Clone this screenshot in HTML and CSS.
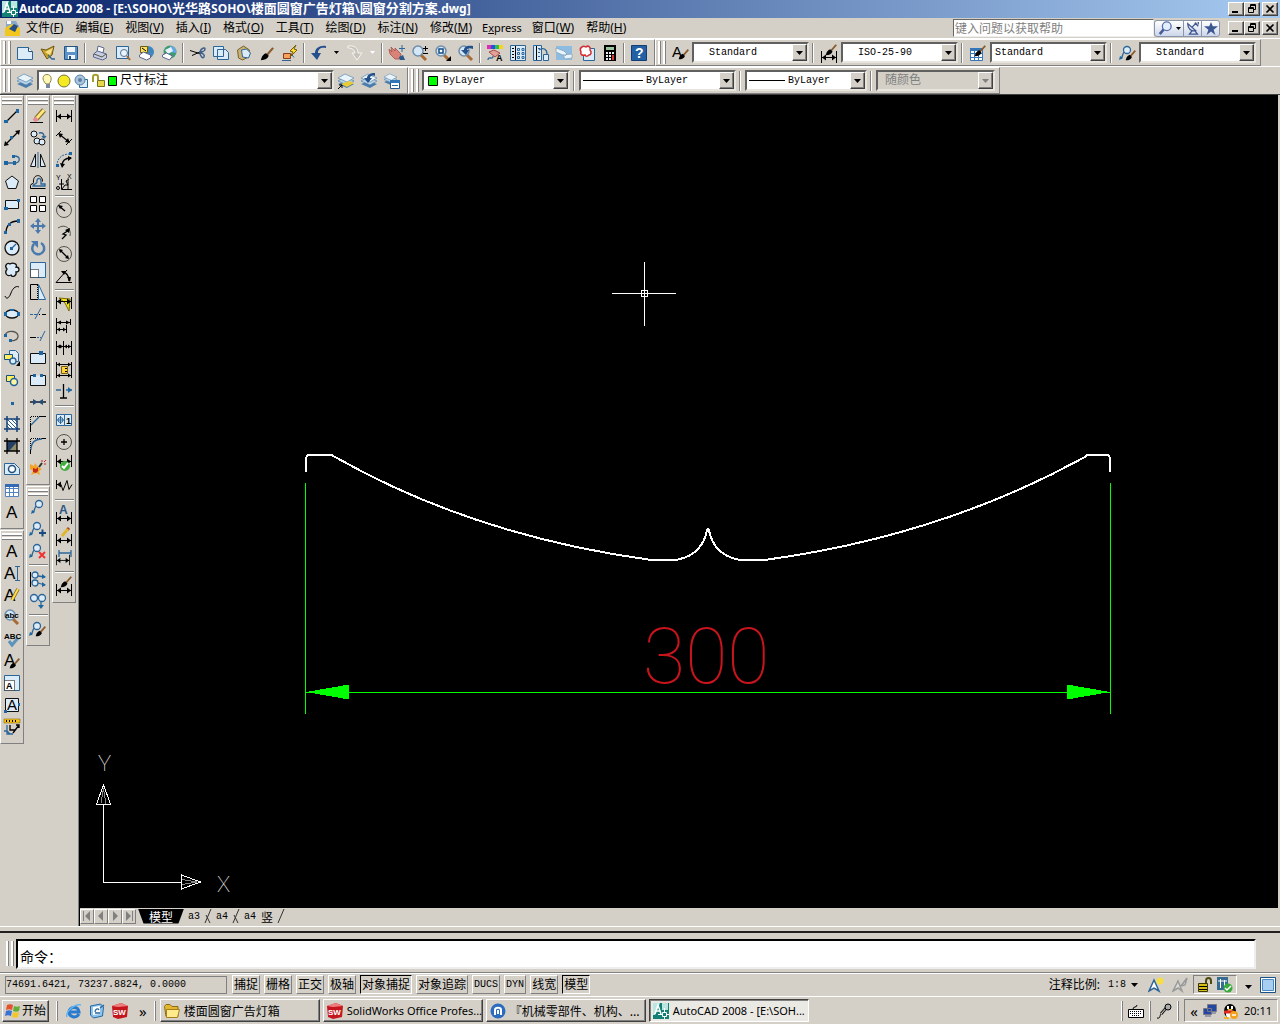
FILE: index.html
```html
<!DOCTYPE html>
<html lang="zh-CN">
<head>
<meta charset="utf-8">
<title>AutoCAD 2008</title>
<link rel="stylesheet" href="styles.css">
</head>
<body>
<svg class="defs" aria-hidden="true">
  <symbol id="acad" viewBox="0 0 16 16"><path fill="#128074" d="M0 0h16v16H0z"/><path fill="#b9e6df" d="M0 0h7L2 12H0zM9 0h6v7H9z"/><path fill="none" stroke="#fff" stroke-width="1.5" d="M2 11 5 2l3 9M3 8h4"/><path fill="#128074" stroke="#fff" d="M9.500 9.500h4v4h-4zM11.500 5v4M11.500 14v2M5 11.500h4M14 11.500h2"/></symbol>
  <symbol id="brush" viewBox="0 0 16 16"><path stroke="#8a5a2c" stroke-width="2.5" d="m15 1-7 8"/><path d="M1 15c1-5 3-7 6-8l3 3c-1 3-4 5-9 5z"/></symbol>
  <symbol id="layers" viewBox="0 0 16 16"><path fill="#4a7cab" d="m0 11 8-3 8 3-7 4z"/><path fill="#b8d3e8" stroke="#4c7ba5" stroke-width=".6" d="m0 8 7-4 9 4-7 4z"/><path fill="#e8f3fa" stroke="#4c7ba5" stroke-width=".6" d="m0 5 7-4 9 4-7 4z"/></symbol>
  <symbol id="dim" viewBox="0 0 16 16"><path fill="none" stroke="#000" d="M.5 2v12M15.500 2v12M1 8.500h14"/><path d="m1 8.500 4-3v6zM15 8.500l-4-3v6z"/></symbol>
  <symbol id="lead" viewBox="0 0 16 16"><circle cx="9" cy="5" r="3.500" class="w s2"/><path class="b s2" d="M6 7c-2 3-1 4-3 7"/><path class="n" d="m1 15 1-4 3 2z"/></symbol>
  <symbol id="glass" viewBox="0 0 16 16"><path stroke="#a76b35" stroke-width="3" d="m9 10 5 5"/><circle cx="6" cy="6" r="5" fill="#d4e7f7" stroke="#6f8daa" stroke-width="1.500"/></symbol>
  <symbol id="sw" viewBox="0 0 16 16"><path fill="#c5161d" d="m0 3 9-3 7 3-1 11-9 2-5-2z"/><path fill="#ef7d7d" d="m0 3 9-3 7 3-10 1z"/><text x="1" y="12" class="sw">SW</text></symbol>
  <symbol id="min" viewBox="0 0 12 10"><path d="M2 7h6v2H2z"/></symbol>
  <symbol id="restore" viewBox="0 0 12 10"><path fill="none" stroke="#000" d="M4.500 3V.5h5v5H8M4 1.500h6M2.500 3.500h5v5h-5zM2 4.500h6"/></symbol>
  <symbol id="close" viewBox="0 0 12 10"><path stroke="#000" stroke-width="1.600" d="m2.500 1.500 7 7m0-7-7 7"/></symbol>
  <symbol id="down" viewBox="0 0 7 4"><path d="M0 0h7L3.500 4z"/></symbol>
</svg>

<header class="title">
  <svg class="i16"><use href="#acad"/></svg>
  <h1>AutoCAD 2008 - [E:\SOHO\<span>光华路</span>SOHO\<span>楼面圆窗广告灯箱</span>\<span>圆窗分割方案</span>.dwg]</h1>
  <div class="winbtns">
    <button aria-label="最小化"><svg><use href="#min"/></svg></button><button aria-label="还原"><svg><use href="#restore"/></svg></button><button class="x" aria-label="关闭"><svg><use href="#close"/></svg></button>
  </div>
</header>

<nav class="menu">
  <svg class="i16" viewBox="0 0 16 16"><path fill="#8aa9c9" d="M1 1h10l3 5v9H1z"/><path fill="#f2c61d" d="M0 8 7 4l8 4v8H0z"/><path fill="#244f86" d="m4 9 5-5 4 2-3 6z"/><path fill="#fff" d="M2 1h4v3H2z"/></svg>
  <button>文件(<u>F</u>)</button><button>编辑(<u>E</u>)</button><button>视图(<u>V</u>)</button><button>插入(<u>I</u>)</button><button>格式(<u>O</u>)</button><button>工具(<u>T</u>)</button><button>绘图(<u>D</u>)</button><button>标注(<u>N</u>)</button><button>修改(<u>M</u>)</button><button class="latin">E<u>x</u>press</button><button>窗口(<u>W</u>)</button><button>帮助(<u>H</u>)</button>
  <input class="ask" type="text" placeholder="键入问题以获取帮助" aria-label="键入问题以获取帮助">
  <div class="askbtns">
    <button class="wide" aria-label="搜索"><svg class="i14" viewBox="0 0 16 16"><path stroke="#4a5c9a" stroke-width="3" d="m7 9-5 6"/><circle cx="10" cy="6" r="5" fill="#e3effc" stroke="#5b6fae" stroke-width="1.500"/></svg><svg class="tiny"><use href="#down"/></svg></button>
    <button aria-label="通讯中心"><svg class="i14" viewBox="0 0 16 16"><path fill="#dbe3f4" stroke="#3f5790" stroke-width="1.500" d="M2 3c0 6 4 9 9 8zM7 7l5-5M7 11l-3 4h9l-3-4M10 2l4 4M14 1v3"/></svg></button>
    <button aria-label="收藏夹"><svg class="i14" viewBox="0 0 16 16"><path fill="#3b5690" d="m8 1 2 5h6l-5 4 2 6-5-4-5 4 2-6-5-4h6z"/></svg></button>
  </div>
  <div class="winbtns">
    <button aria-label="最小化图形"><svg><use href="#min"/></svg></button><button aria-label="还原图形"><svg><use href="#restore"/></svg></button><button class="x" aria-label="关闭图形"><svg><use href="#close"/></svg></button>
  </div>
</nav>

<div class="row">
  <div class="bar" role="toolbar" aria-label="标准">
    <i class="grip"></i>
    <button class="t" aria-label="新建"><svg viewBox="0 0 16 16"><path class="w" d="M.5 2.500h11l4 4v8H.5z"/><path fill="#fff" stroke="#25507c" d="M11.500 2.500v4h4"/></svg></button>
    <button class="t" aria-label="打开"><svg viewBox="0 0 16 16"><path fill="#c9a227" stroke="#6e5713" d="m1 4 5 1 8-4-2 9-5 4z"/><path fill="#f6e08a" d="m5 7 8-4-3 7z"/><path class="b s2" d="m8 10 4 4 3 0"/></svg></button>
    <button class="t" aria-label="保存"><svg viewBox="0 0 16 16"><path fill="#5b93c8" stroke="#28527f" d="M1.500 1.500h13v13h-13z"/><path fill="#eef6fd" d="M4 2h8v5H4zM5 10h7v4H5z"/><path fill="#28527f" d="M6 11h2v3H6z"/></svg></button>
    <i class="sep"></i>
    <button class="t" aria-label="打印"><svg viewBox="0 0 16 16"><path fill="#fff" stroke="#5b6790" d="m5 7 1-6 6 2-1 5z"/><path fill="#c9cfe0" stroke="#5b6790" d="m1.500 9 4-3 9 3v4l-4 2-9-3z"/><path class="g" d="m2 9 8 3 4-3"/></svg></button>
    <button class="t" aria-label="打印预览"><svg viewBox="0 0 16 16"><path class="w" d="M1.500 1.500h12v12h-12z"/><circle cx="9" cy="8" r="3.500" fill="#eaf5ff" stroke="#53728f"/><path stroke="#9b6b3b" stroke-width="2" d="m12 11 3 4"/></svg></button>
    <button class="t" aria-label="发布"><svg viewBox="0 0 16 16"><circle cx="10" cy="7" r="6" fill="#3f86bd"/><path fill="#ffe15a" stroke="#6b5a1a" d="M2.500 1.500h7v6h-7z"/><path fill="#fff" stroke="#5b6790" d="m1.500 10 4-3 7 3v3l-4 2-7-3z"/><path class="k" d="m4 3 4 3"/></svg></button>
    <button class="t" aria-label="三维 DWF"><svg viewBox="0 0 16 16"><circle cx="9" cy="7" r="6.500" fill="#3c9b72"/><path fill="#64a8e3" d="M9 1c4 0 7 3 6 7L9 7z"/><path fill="#e6f1fa" d="m4 5 6-3 2 4-5 3z"/><path fill="#fff" stroke="#5b6790" d="m1.500 10 4-2 6 3-3 4-7-3z"/></svg></button>
    <i class="sep"></i>
    <button class="t" aria-label="剪切"><svg viewBox="0 0 16 16"><path class="k" d="M0 5.500 11 9M2 10.500l9-4"/><path fill="none" stroke="#445e8c" stroke-width="1.500" d="M10 7c1-4 5-5 5-3s-3 3-5 3zM10 8c3 0 5 2 4 4s-4-1-4-4z"/></svg></button>
    <button class="t" aria-label="复制"><svg viewBox="0 0 16 16"><path class="w" d="M.5 1.500h10v10H.5zM4.500 4.500h8l3 3v7h-11z"/></svg></button>
    <button class="t" aria-label="粘贴"><svg viewBox="0 0 16 16"><path fill="#cbb274" stroke="#75612b" d="m1.500 5 6-4 6 4-1 7-6 3-4-2z"/><path class="w" d="m5.500 5 5-1 4 4-2 5-6-1z"/></svg></button>
    <button class="t" aria-label="特性匹配"><svg viewBox="0 0 16 16"><use href="#brush" x="1" y="2" width="14" height="14"/></svg></button>
    <button class="t" aria-label="块编辑器"><svg viewBox="0 0 16 16"><path fill="#f6a15d" stroke="#8d3a18" d="M1.500 8.500h7v5h-7z"/><path class="b" d="M0 15.500h9m0-7 3 4"/><path fill="#ffdc34" stroke="#775b00" d="m14 0-6 6 3 1-3 5 7-7-3-1z"/></svg></button>
    <i class="sep"></i>
    <button class="t" aria-label="放弃"><svg viewBox="0 0 16 16"><path fill="#24508c" d="M15 1C9 0 4 3 4 8H0l6 7 4-7H7c0-4 3-6 8-5z"/></svg></button>
    <button class="t arrow" aria-label="放弃列表"><svg><use href="#down"/></svg></button>
    <button class="t" aria-label="重做"><svg viewBox="0 0 16 16"><path fill="#c6c3bc" stroke="#f7f5f0" d="M1 1c6-1 10 2 10 7h4l-5 7-5-7h3c0-3-3-5-7-5z"/></svg></button>
    <button class="t arrow off" aria-label="重做列表"><svg><use href="#down"/></svg></button>
    <i class="sep"></i>
    <button class="t" aria-label="实时平移"><svg viewBox="0 0 16 16"><path fill="#d98278" stroke="#a34f48" stroke-width=".8" d="m0 4 3 3-1-5 4 4V3l6 6-1 5H6L1 9z"/><path fill="#28598c" d="m10 12 4-2 2 5h-5z"/><path class="b" d="M13 0v7M10 3.500h6"/></svg></button>
    <button class="t" aria-label="实时缩放"><svg viewBox="0 0 16 16"><use href="#glass"/><path class="k" d="M13.500 1v5M11 3.500h5M11 8.500h5"/></svg></button>
    <button class="t" aria-label="窗口缩放"><svg viewBox="0 0 16 16"><use href="#glass"/><path fill="#fff" stroke="#164d83" stroke-width="1.500" d="M4 4h4v4H4z"/><path d="M16 11v5h-5z"/></svg></button>
    <button class="t" aria-label="缩放上一个"><svg viewBox="0 0 16 16"><use href="#glass"/><path fill="#24508c" d="M15 1C9 0 6 2 6 5H3l5 5 3-5H9c0-2 3-2 6-1z"/></svg></button>
    <i class="sep"></i>
    <button class="t" aria-label="特性"><svg viewBox="0 0 16 16"><path fill="#e12bb5" d="M0 0h4v4H0z"/><path fill="#2750df" d="M4 0h4v4H4z"/><path fill="#28c252" d="M8 0h4v4H8z"/><path fill="#f5d51d" d="M12 0h4v4h-4z"/><path fill="#e3a19a" stroke="#a44d49" d="m2 7 5-2 6 3-5 4z"/><path class="b s2" d="M1 15c0-5 5 1 5-4"/><text x="9" y="16" class="gl9">A</text></svg></button>
    <button class="t" aria-label="设计中心"><svg viewBox="0 0 16 16"><path class="w" d="M.5.5h15v15H.5z"/><path class="k" d="M5.500 1v14M2 3.500h2M2 6.500h2M2 9.500h2M2 12.500h2"/><path class="b" d="M7.500 3.500h2v2h-2zM12 3.500h2v2h-2zM7.500 7.500h2v2h-2zM12 7.500h2v2h-2zM7.500 11.500h2v2h-2zM12 11.500h2v2h-2z"/></svg></button>
    <button class="t" aria-label="工具选项板"><svg viewBox="0 0 16 16"><path class="w" d="M.5.500h8v15h-8z"/><path class="k" d="M3.500 1v14"/><path class="b" d="M5 3.500h2M5 7.500h2M5 11.500h2"/><path class="b s2" d="M6 5c4-3 8-1 8 4"/><path class="w" d="M10.500 9.500h5v6h-5z"/></svg></button>
    <button class="t" aria-label="图纸集"><svg viewBox="0 0 16 16"><path fill="#8ebce0" d="M0 1h16v14H0z"/><path fill="#e9f4fb" stroke="#7f9db8" stroke-width=".7" d="m0 3 8 3 3 3-2 2-9-4zM7 10l9-1v4l-7 1z"/></svg></button>
    <button class="t" aria-label="标记集"><svg viewBox="0 0 16 16"><path class="w" d="M4.500 3.500h11v12h-11z"/><path fill="#fff" stroke="#d62b31" stroke-width="1.500" d="M3 2c2-2 3 0 4 0 2-2 5 0 4 3 2 2 1 5-1 5-2 2-4 1-4 0-3 1-5-1-4-3-1-2-1-4 1-5z"/></svg></button>
    <button class="t" aria-label="计算器"><svg viewBox="0 0 16 16"><path d="M2 0h12v16H2z"/><path fill="#9bc59d" d="M4 2h8v3H4z"/><path fill="#eee" d="M4 7h2v2H4zm3 0h2v2H7zm3 0h2v2h-2zM4 10h2v2H4zm3 0h2v2H7zM4 13h2v2H4zm3 0h2v2H7z"/><path fill="#d53838" d="M10 10h2v5h-2z"/></svg></button>
    <i class="sep"></i>
    <button class="t" aria-label="帮助"><svg viewBox="0 0 16 16"><path fill="#2460a4" stroke="#123e74" d="M.5.5h15v15H.5z"/><text x="4" y="13" class="q">?</text></svg></button>
  </div>
  <div class="bar" role="toolbar" aria-label="样式">
    <i class="grip"></i>
    <button class="t" aria-label="文字样式"><svg viewBox="0 0 16 16"><text x="0" y="12" class="gl15">A</text><use href="#brush" x="6" y="4" width="11" height="11"/></svg></button>
    <div class="combo style in"><select aria-label="文字样式控制"><option>Standard</option></select><span class="drop"><svg><use href="#down"/></svg></span></div>
    <i class="sep far"></i>
    <button class="t" aria-label="标注样式"><svg viewBox="0 0 16 16"><use href="#dim" y="4" width="16" height="16"/><use href="#brush" x="4" y="-1" width="12" height="12"/></svg></button>
    <div class="combo style in"><select aria-label="标注样式控制"><option>ISO-25-90</option></select><span class="drop"><svg><use href="#down"/></svg></span></div>
    <i class="sep far"></i>
    <button class="t" aria-label="表格样式"><svg viewBox="0 0 16 16"><path fill="#fff" stroke="#3577b8" d="M.5 4.500h12v11H.5zM1 8.500h12M1 12.500h12M4.500 5v11M8.500 5v11"/><path fill="#3577b8" d="M0 3h13v3H0z"/><use href="#brush" x="4" width="12" height="12"/></svg></button>
    <div class="combo style"><select aria-label="表格样式控制"><option>Standard</option></select><span class="drop"><svg><use href="#down"/></svg></span></div>
    <i class="sep far"></i>
    <button class="t" aria-label="多重引线样式"><svg viewBox="0 0 16 16"><use href="#lead" x="-1" width="16" height="16"/><use href="#brush" x="6" y="5" width="11" height="11"/></svg></button>
    <div class="combo style in"><select aria-label="多重引线样式控制"><option>Standard</option></select><span class="drop"><svg><use href="#down"/></svg></span></div>
  </div>
</div>

<div class="row">
  <div class="bar" role="toolbar" aria-label="图层">
    <i class="grip"></i>
    <button class="t" aria-label="图层特性管理器"><svg><use href="#layers"/></svg></button>
    <div class="combo layer cjk">
      <svg class="lay" viewBox="0 0 76 16"><path fill="#fff9b5" stroke="#8b8243" d="M5 11C0 6 2 1.500 6 1.500S12 6 8 11z"/><path fill="#7987a0" d="M5 11h4v4H5z"/><circle cx="23" cy="8" r="6" fill="#f5ea22" stroke="#76733a"/><path class="w" d="M38.500 6.500h8v8h-8z"/><circle cx="39" cy="7" r="5" fill="#a9c4dc" stroke="#5a7fa3"/><circle cx="39" cy="7" r="2" fill="#5a7fa3"/><path fill="none" stroke="#a89c2e" stroke-width="2" d="M52 9V4c0-3 5-3 5 0v3"/><path fill="#e6d84b" stroke="#7b7319" d="M56.500 7.500h7v6h-7z"/><path fill="#0f0" stroke="#000" d="M67.500 3.500h8v9h-8z"/></svg>
      <select aria-label="图层控制"><option>尺寸标注</option></select><span class="drop"><svg><use href="#down"/></svg></span></div>
    <button class="t" aria-label="将对象的图层置为当前"><svg viewBox="0 0 16 16"><use href="#layers"/><path fill="#e8cc32" d="m3 11 8-3 5 2-7 4z"/><path class="k" d="m0 16 4-4m-3 0h3v3"/></svg></button>
    <button class="t" aria-label="上一个图层"><svg viewBox="0 0 16 16"><use href="#layers"/><path fill="#24508c" d="M14 0C9 0 6 2 6 5H3l4 5 4-5H9c0-2 2-3 5-2z"/></svg></button>
    <button class="t" aria-label="图层状态管理器"><svg viewBox="0 0 16 16"><use href="#layers" width="13" height="13"/><path fill="#fff" stroke="#21568e" d="M6.500 7.500h9v8h-9z"/><path fill="#2f74b5" d="M6 7h10v3H6z"/><path class="b" d="M8 12.500h6"/></svg></button>
  </div>
  <div class="bar" role="toolbar" aria-label="特性">
    <i class="grip"></i>
    <div class="combo color"><svg class="sw10" viewBox="0 0 10 10"><path fill="#0f0" stroke="#000" d="M.5.500h9v9h-9z"/></svg><select aria-label="颜色控制"><option>ByLayer</option></select><span class="drop"><svg><use href="#down"/></svg></span></div>
    <i class="sep far"></i>
    <div class="combo ltype"><i class="rule"></i><select aria-label="线型控制"><option>ByLayer</option></select><span class="drop"><svg><use href="#down"/></svg></span></div>
    <i class="sep far"></i>
    <div class="combo lweight"><i class="rule short"></i><select aria-label="线宽控制"><option>ByLayer</option></select><span class="drop"><svg><use href="#down"/></svg></span></div>
    <i class="sep far"></i>
    <div class="combo plot cjk disabled"><select aria-label="打印样式控制" disabled><option>随颜色</option></select><span class="drop"><svg><use href="#down"/></svg></span></div>
  </div>
</div>

<main>
  <aside class="dock">
    <div class="col">
      <div class="vbar" role="toolbar" aria-label="绘图">
        <i class="vgrip"></i>
        <button class="t" aria-label="直线"><svg viewBox="0 0 16 16"><path class="k s2" d="M2 14 14 2"/><path class="n" d="M0 12h4v3H0zM12 1h3v4h-3z"/></svg></button>
        <button class="t" aria-label="构造线"><svg viewBox="0 0 16 16"><path class="k s2" d="M2 14 14 2"/><path d="m0 16 1-5 4 4zM16 0l-5 1 4 4z"/><path class="n" d="M6 6h3v3H6z"/></svg></button>
        <button class="t" aria-label="多段线"><svg viewBox="0 0 16 16"><path class="b s2" d="M2 11h8c7 0 7-7 0-7"/><path class="n" d="M0 9h4v4H0zM9 9h3v4H9zM8 3h3v3H8z"/></svg></button>
        <button class="t" aria-label="正多边形"><svg viewBox="0 0 16 16"><path class="w kk" d="m8 2 6.500 5-2.500 7.500H4L1.500 7z"/></svg></button>
        <button class="t" aria-label="矩形"><svg viewBox="0 0 16 16"><path class="w kk" d="M1.500 4.500h13v8h-13z"/><path class="n" d="M0 11h4v3H0zM13 3h3v3h-3z"/></svg></button>
        <button class="t" aria-label="圆弧"><svg viewBox="0 0 16 16"><path class="k s2" d="M2 15C2 7 7 3 14 3"/><path class="n" d="M0 13h3v3H0zM4 5h3v3H4zM13 1h3v4h-3z"/></svg></button>
        <button class="t" aria-label="圆"><svg viewBox="0 0 16 16"><circle class="w kk s2" cx="8" cy="8" r="7"/><path class="b s2" d="m8 8 4-4"/><path class="n" d="M6 7h3v3H6z"/></svg></button>
        <button class="t" aria-label="修订云线"><svg viewBox="0 0 16 16"><path class="w kk s2" d="M3 7C0 4 3 0 6 2c3-2 8 0 6 3 4 0 4 5 0 5 1 4-4 6-5 3-4 2-7-2-4-6z"/></svg></button>
        <button class="t" aria-label="样条曲线"><svg viewBox="0 0 16 16"><path class="k" d="M1 12c2 5 5 0 6-3s4-8 8-6"/></svg></button>
        <button class="t" aria-label="椭圆"><svg viewBox="0 0 16 16"><ellipse class="w kk s2" cx="8" cy="8" rx="6.500" ry="4"/><path class="n" d="M0 6h3v4H0zM13 6h3v4h-3zM6 3h4v2H6z"/></svg></button>
        <button class="t" aria-label="椭圆弧"><svg viewBox="0 0 16 16"><path class="g s2" d="M1 7c3-6 14-4 13 2-1 4-6 4-8 3"/><path class="n" d="M0 6h3v3H0zM5 11h3v3H5z"/></svg></button>
        <button class="t" aria-label="插入块"><svg viewBox="0 0 16 16"><path class="w" d="M5.500.5h6l3 3v8h-9z"/><path fill="#ffef5d" stroke="#175184" d="M.5 4.500h8v5h-8z"/><circle class="w s2" cx="9" cy="11" r="3"/><path d="M16 11v5h-4z"/></svg></button>
        <button class="t" aria-label="创建块"><svg viewBox="0 0 16 16"><path fill="#ffef5d" stroke="#175184" d="M2.500 3.500h8v6h-8z"/><circle fill="#fff7a0" stroke="#1d629d" stroke-width="1.500" cx="10" cy="10" r="3.500"/></svg></button>
        <button class="t" aria-label="点"><svg viewBox="0 0 16 16"><path class="n" d="M7 8h3v3H7z"/></svg></button>
        <button class="t" aria-label="图案填充"><svg viewBox="0 0 16 16"><path fill="#fff" d="M3 3h10v10H3z"/><path class="b" d="m3 3 10 10M3 7l6 6M7 3l6 6M3 10l3 3M10 3l3 3"/><path fill="none" stroke="#153f75" stroke-width="1.500" d="M3 0v16M13 0v16M0 3h16M0 13h16"/></svg></button>
        <button class="t" aria-label="渐变色"><svg viewBox="0 0 16 16"><path fill="#244064" d="M3 3h10v10H3z"/><path fill="#8d8c6b" d="m5 13 8-9v9z"/><path class="k s2" d="M3 0v16M13 0v16M0 3h16M0 13h16"/></svg></button>
        <button class="t" aria-label="面域"><svg viewBox="0 0 16 16"><path class="w" d="M.5 3.500h10l5 5v6H.5z"/><circle cx="8" cy="9" r="3.500" fill="#fff" stroke="#25507c" stroke-width="1.500"/></svg></button>
        <button class="t" aria-label="表格"><svg viewBox="0 0 16 16"><path fill="#fff" stroke="#5282c4" d="M1.500 2.500h13v12h-13zM2 6.500h12M2 10.500h12M5.500 3v11M9.500 3v11"/><path fill="#3669b3" d="M1 2h14v3H1z"/></svg></button>
        <button class="t" aria-label="多行文字"><svg viewBox="0 0 16 16"><text x="2" y="14" class="gl17">A</text></svg></button>
      </div>
      <div class="vbar" role="toolbar" aria-label="文字">
        <i class="vgrip"></i>
        <button class="t" aria-label="多行文字"><svg viewBox="0 0 16 16"><text x="2" y="14" class="gl17">A</text></svg></button>
        <button class="t" aria-label="单行文字"><svg viewBox="0 0 16 16"><text x="0" y="14" class="gl17">A</text><path class="b" d="M11 1.500h5M11 15.500h5M13.500 2v13"/></svg></button>
        <button class="t" aria-label="编辑文字"><svg viewBox="0 0 16 16"><text x="0" y="14" class="gl17">A</text><path stroke="#7a5b16" stroke-width="3.500" d="M14 2 8 13"/><path stroke="#ffe04b" stroke-width="2" d="M14 2 8 13"/></svg></button>
        <button class="t" aria-label="查找"><svg viewBox="0 0 16 16"><use href="#glass"/><text x="1" y="9" class="gl8">abc</text></svg></button>
        <button class="t" aria-label="拼写检查"><svg viewBox="0 0 16 16"><path fill="none" stroke="#5c93bc" stroke-width="3" d="m5 10 3 4 6-7"/><text x="0" y="8" class="gl8">ABC</text></svg></button>
        <button class="t" aria-label="文字样式"><svg viewBox="0 0 16 16"><text x="0" y="13" class="gl17">A</text><use href="#brush" x="5" y="5" width="11" height="11"/></svg></button>
        <button class="t" aria-label="比例"><svg viewBox="0 0 16 16"><path class="w" d="M.5.500h15v15H.5z"/><path fill="#fff" stroke="#000" stroke-dasharray="1 1" d="M.5 5.500h10v10H.5z"/><text x="2" y="14" class="gl9">A</text></svg></button>
        <button class="t" aria-label="对正"><svg viewBox="0 0 16 16"><path class="w kk" d="M1.500 1.500h13v13h-13z"/><text x="3" y="13" class="gl15">A</text><path class="n" d="M0 13h3v3H0zM14 6h2v3h-2z"/></svg></button>
        <button class="t" aria-label="转换空间"><svg viewBox="0 0 16 16"><path fill="#f5c51c" stroke="#8a6900" stroke-width=".6" d="M0 0h16v4H0z"/><path class="k" d="M2.500 1v2M5.500 1v2M8.500 1v2M11.500 1v2"/><path class="b s2" d="M3 6v9h6M0 12h3l3 3"/><path class="k s2" d="m9 14 6-8m-3 0h3v3M6 6v5h5"/></svg></button>
      </div>
    </div>
    <div class="col">
      <div class="vbar" role="toolbar" aria-label="修改">
        <i class="vgrip"></i>
        <button class="t" aria-label="删除"><svg viewBox="0 0 16 16"><path stroke="#7d651d" stroke-width="5" d="m14 2-8 9"/><path stroke="#ffe77d" stroke-width="3" d="m14 2-8 9"/><path stroke="#e58a94" stroke-width="4" d="m7 10-3 3"/><path class="k" d="M0 14.500h13"/></svg></button>
        <button class="t" aria-label="复制"><svg viewBox="0 0 16 16"><g class="w kk"><circle cx="4" cy="4" r="3"/><circle cx="7" cy="11" r="3"/><circle cx="12" cy="12" r="3"/></g><path class="b s2" d="M9 3c4-1 5 1 5 4m-2-1 2 2 2-2"/></svg></button>
        <button class="t" aria-label="镜像"><svg viewBox="0 0 16 16"><path class="w kk" d="M5.500 2v12.500H.500zM10.500 2v12.500h5z"/><path class="b" d="M8 0v16"/></svg></button>
        <button class="t" aria-label="偏移"><svg viewBox="0 0 16 16"><path class="k" d="M.5 14.500h15M.5 14.500v-3c0-2 3-1 3-3-1-9 9-9 9-1"/><path class="b s2" d="M3 12h12v-2h-4V7c0-4-5-3-4 1 0 2-3 1-4 4z"/></svg></button>
        <button class="t" aria-label="阵列"><svg viewBox="0 0 16 16"><path fill="#fff" stroke="#000" d="M.5.500h6v6h-6zM9.500.500h6v6h-6zM.5 9.500h6v6h-6zM9.500 9.500h6v6h-6z"/></svg></button>
        <button class="t" aria-label="移动"><svg viewBox="0 0 16 16"><path fill="#4979ad" d="m8 0 3 4H9v3h3V5l4 3-4 3V9H9v3h2l-3 4-3-4h2V9H4v2L0 8l4-3v2h3V4H5z"/></svg></button>
        <button class="t" aria-label="旋转"><svg viewBox="0 0 16 16"><path fill="none" stroke="#4979ad" stroke-width="2.500" d="M11 3a6 6 0 1 1-7 1"/><path fill="#4979ad" d="M1 1h7v7z"/></svg></button>
        <button class="t" aria-label="缩放"><svg viewBox="0 0 16 16"><path class="w" d="M.5.500h15v15H.5z"/><path fill="#fff" stroke="#000" stroke-dasharray="1 1" d="M.5 7.500h8v8h-8z"/></svg></button>
        <button class="t" aria-label="拉伸"><svg viewBox="0 0 16 16"><path class="w" d="M8.500.500v15h7z"/><path class="k" d="M8 .5H.5v15H8"/><path class="k" stroke-dasharray="1 1" d="M7.500 1v15"/></svg></button>
        <button class="t" aria-label="修剪"><svg viewBox="0 0 16 16"><path class="b" stroke-dasharray="3 1" d="M0 8.500h8"/><path class="k" d="M9 8.500h1m2 0h4"/><path class="b" d="M5 13 11 2"/></svg></button>
        <button class="t" aria-label="延伸"><svg viewBox="0 0 16 16"><path class="k" d="M0 9.500h6"/><path class="b" stroke-dasharray="2 1" d="M7 9.500h4"/><path class="b" d="m10 13 5-10"/></svg></button>
        <button class="t" aria-label="打断于点"><svg viewBox="0 0 16 16"><path class="w kk" d="M.5 3.500h15v10H.5z"/><path class="n" d="M9 1h4v4H9z"/></svg></button>
        <button class="t" aria-label="打断"><svg viewBox="0 0 16 16"><path class="w kk" d="M5 3.500H.5v10h15v-10H11"/><path class="n" d="M3 2h3v3H3zM10 2h3v3h-3z"/></svg></button>
        <button class="t" aria-label="合并"><svg viewBox="0 0 16 16"><path class="k s2" d="M0 8h16"/><path fill="#244b7a" d="m3 5 5 3-5 3zM13 5 8 8l5 3z"/></svg></button>
        <button class="t" aria-label="倒角"><svg viewBox="0 0 16 16"><path class="k" stroke-dasharray="1 1" d="M.5 8V.5H8"/><path class="k" d="M.5 16V8M9 .5h7"/><path class="b s2" d="m1 9 8-8"/></svg></button>
        <button class="t" aria-label="圆角"><svg viewBox="0 0 16 16"><path class="k" stroke-dasharray="1 1" d="M.5 10V.5H10"/><path class="k" d="M.5 16v-5M11 .5h5"/><path class="b s2" d="M1 12C1 5 5 1 12 1"/></svg></button>
        <button class="t" aria-label="分解"><svg viewBox="0 0 16 16"><path fill="#f3a424" d="m0 4 4 2 1-3 3 4 4 2-3 2 1 4-4-2-5 2 2-4-3-2z"/><path fill="#c4281b" d="m3 8 3 1 2-2 0 4-2 2-3-1z"/><path stroke="#333" stroke-width="2" d="m9 7 3-4"/><path stroke="#c4281b" d="M12 0v2m2 2h2m-2-2 2-2"/></svg></button>
      </div>
      <div class="vbar" role="toolbar" aria-label="多重引线">
        <i class="vgrip"></i>
        <button class="t" aria-label="多重引线"><svg><use href="#lead"/></svg></button>
        <button class="t" aria-label="添加引线"><svg viewBox="0 0 16 16"><use href="#lead" x="-2" width="16" height="16"/><path stroke="#174a80" stroke-width="2" d="M9 12h7M12.500 8.500v7"/></svg></button>
        <button class="t" aria-label="删除引线"><svg viewBox="0 0 16 16"><use href="#lead" x="-2" width="16" height="16"/><path stroke="#e33" stroke-width="2" d="m9 9 6 6m0-6-6 6"/></svg></button>
        <i class="vsep"></i>
        <button class="t" aria-label="多重引线对齐"><svg viewBox="0 0 16 16"><path class="k" d="M.5 1v15"/><g class="w s2"><circle cx="5" cy="4" r="3"/><circle cx="5" cy="12" r="3"/></g><path class="b s2" d="m8 5 7 1M8 12l7 2"/><path class="n" d="m12 3 4 3-4 2zM12 11l4 3-4 2z"/></svg></button>
        <button class="t" aria-label="多重引线合并"><svg viewBox="0 0 16 16"><g class="w s2"><circle cx="4" cy="5" r="3.500"/><circle cx="12" cy="5" r="3.500"/></g><path class="b s2" d="M11 8v5"/><path class="n" d="M8 12h6l-3 4z"/></svg></button>
        <i class="vsep"></i>
        <button class="t" aria-label="多重引线样式"><svg viewBox="0 0 16 16"><use href="#lead" x="-2" width="16" height="16"/><use href="#brush" x="5" y="5" width="11" height="11"/></svg></button>
      </div>
    </div>
    <div class="col">
      <div class="vbar" role="toolbar" aria-label="标注">
        <i class="vgrip"></i>
        <button class="t" aria-label="线性"><svg><use href="#dim"/></svg></button>
        <button class="t" aria-label="对齐"><svg viewBox="0 0 16 16"><path class="k" d="m0 6 5-5M10 15l6-6"/><path class="k s2" d="m3 4 10 8"/><path d="m2 3 5 1-3 4zM14 13l-5-1 3-4z"/></svg></button>
        <button class="t" aria-label="弧长"><svg viewBox="0 0 16 16"><path class="k s2" d="M6 14c0-5 3-8 9-8"/><path class="b" stroke-dasharray="2 1" d="M1 14C1 6 6 2 14 2"/><path d="m4 11 2 5 3-4zM12 4l4 2-4 3z"/><path class="n" d="M0 12h3v3H0zM13 0h3v3h-3z"/></svg></button>
        <button class="t" aria-label="坐标"><svg viewBox="0 0 16 16"><path class="k" d="M5.500 5v10.500H16M6 15l3-4h3l-2-4 3-2M3 10h5m4-4v9"/><text x="0" y="6" class="gl7">Y</text><text x="11" y="5" class="gl7">X</text><circle class="k" cx="2" cy="14" r="1.500"/></svg></button>
        <i class="vsep"></i>
        <button class="t" aria-label="半径"><svg viewBox="0 0 16 16"><circle class="g" cx="8" cy="8" r="7.500"/><path class="k s2" d="m3 4 6 5"/><path d="m2 3 5 1-3 3z"/></svg></button>
        <button class="t" aria-label="折弯"><svg viewBox="0 0 16 16"><path class="g" d="M2 4c7-5 14 1 12 8"/><path class="k s2" d="m6 15 4-4-3-1 6-4"/><path d="m14 4-1 5-4-3z"/></svg></button>
        <button class="t" aria-label="直径"><svg viewBox="0 0 16 16"><circle class="g" cx="8" cy="8" r="7.500"/><path class="k s2" d="m4 4 8 8"/><path d="m3 3 4 1-3 3zM13 13l-4-1 3-3z"/></svg></button>
        <button class="t" aria-label="角度"><svg viewBox="0 0 16 16"><path class="k" d="M16 14.500H0L11 2"/><path class="k s2" d="M7 4c4 1 6 5 6 9"/><path d="m5 3 5 0-2 4zM11 9l4 0-1 5z"/></svg></button>
        <i class="vsep"></i>
        <button class="t" aria-label="快速标注"><svg viewBox="0 0 16 16"><path fill="#f8e51b" stroke="#776b00" d="m3 2 11 1-1 12-4-8z"/><path class="k" d="M.5 1v12M15.500 1v12M1 5.500h14"/><path d="m1 5.500 4-3v6zM15 5.500l-4-3v6z"/></svg></button>
        <button class="t" aria-label="基线"><svg viewBox="0 0 16 16"><path class="k" d="M.5 0v16M14.500 1v6M10.500 7v8M1 4.500h13M1 11.500h9"/><path d="m1 4.500 4-2v4zM14 4.500l-4-2v4zM1 11.500l3-2v4zM10 11.500l-3-2v4z"/></svg></button>
        <button class="t" aria-label="连续"><svg viewBox="0 0 16 16"><path class="k" d="M.5 1v14M7.500 1v14M15.500 1v14M1 6.500h14"/><path d="m1 6.500 3-2v4zM7 6.500l-3-2v4zM8 6.500l3-2v4zM15 6.500l-3-2v4z"/></svg></button>
        <button class="t" aria-label="标注间距"><svg viewBox="0 0 16 16"><path class="k" d="M.5 0v16M15.500 0v16M1 2.500h14M1 13.500h14"/><path fill="#ffd43b" stroke="#795c0d" d="M5.500 4.500h6v7h-6z"/><path class="k" d="M9 6.500h2M9 9.500h2"/><path d="m1 2.500 3-2v4zM15 2.500l-3-2v4zM1 13.500l3-2v4zM15 13.500l-3-2v4z"/></svg></button>
        <button class="t" aria-label="标注打断"><svg viewBox="0 0 16 16"><path class="k s2" d="M7.500 0v14M4 14h7"/><path class="b s2" d="M0 6h5m5 0h6"/><path class="n" d="m12 3 4 3-4 3z"/></svg></button>
        <i class="vsep"></i>
        <button class="t" aria-label="公差"><svg viewBox="0 0 16 16"><path class="w" d="M.5 2.500h15v11H.5z"/><path class="b" d="M8.500 3v10M1 8h7M4.500 4v8"/><circle class="b" cx="4.500" cy="8" r="2.500"/><text x="10" y="12" class="gl9">1</text></svg></button>
        <button class="t" aria-label="圆心标记"><svg viewBox="0 0 16 16"><circle class="g" cx="8" cy="8" r="7.500"/><path class="k s2" d="M5 8h6M8 5v6"/></svg></button>
        <button class="t" aria-label="检验"><svg viewBox="0 0 16 16"><use href="#dim" y="-3" width="16" height="16"/><circle cx="9" cy="10" r="5" fill="#43ae3f"/><path fill="none" stroke="#fff" stroke-width="2" d="m6 10 2 2 4-5"/></svg></button>
        <button class="t" aria-label="折弯线性"><svg viewBox="0 0 16 16"><path class="k" d="M.5 2v9M1 6.500h4l2 6 4-10 2 9 3-5"/><path d="m1 6.500 4-3v6z"/></svg></button>
        <i class="vsep"></i>
        <button class="t" aria-label="编辑标注"><svg viewBox="0 0 16 16"><use href="#dim" y="4" width="16" height="16"/><text x="3" y="8" class="gl12">A</text></svg></button>
        <button class="t" aria-label="编辑标注文字"><svg viewBox="0 0 16 16"><use href="#dim" y="4" width="16" height="16"/><path stroke="#a33f28" stroke-width="3" d="m13 0-2 2"/><path stroke="#e3b72d" stroke-width="3" d="m12 1-6 7"/></svg></button>
        <button class="t" aria-label="标注更新"><svg viewBox="0 0 16 16"><path class="b s2" d="M3 0v7M15 0v7M3 3h12"/><use href="#dim" y="2" width="14" height="16"/></svg></button>
        <i class="vsep"></i>
        <button class="t" aria-label="标注样式"><svg viewBox="0 0 16 16"><use href="#dim" y="4" width="16" height="16"/><use href="#brush" x="4" y="-2" width="12" height="12"/></svg></button>
      </div>
    </div>
  </aside>

  <section class="view">
    <svg class="canvas" viewBox="80 96 1198 812" role="img" aria-label="图形窗口">
      <g fill="none" stroke="#fff">
        <path d="M612 293.500h29m6 0h29M644.500 262v28m0 7v29M641.500 290.500h6v6h-6zM644.500 291v5M642 293.500h5"/>
        <path stroke-width="2" d="M306 472V460Q306 455 311 455H328Q332 455 336 458Q474 536 648 560Q666 562 678 560Q702 555 707 531Q708 528 709 531Q714 555 738 560Q750 562 768 560Q942 536 1084 458Q1087 455 1090 455H1105Q1110 455 1110 460V472"/>
        <path d="M103.500 805v77.500H181M96.500 804.500h14l-7-19zM181.500 875.500v14l19-7z"/>
        <path stroke="#888" d="M101 804l2.500-15 2.500 15M182 880l15 2.500-15 2.500"/>
      </g>
      <text class="axis" x="98" y="771">Y</text>
      <text class="axis" x="217" y="892">X</text>
      <path stroke="#0f0" fill="none" d="M305.500 483v231M1110.500 483v231M306 692.500h804"/>
      <path fill="#0f0" d="m306 692.500 43-7.500v15zM1110 692.500l-43-7.500v15z"/>
      <text class="measure" x="643" y="683">300</text>
    </svg>
    <div class="tabs">
      <button class="nav" aria-label="第一个"><svg viewBox="0 0 10 10"><path d="M1 0h1v10H1zM8 0v10L3 5z"/></svg></button><button class="nav" aria-label="上一个"><svg viewBox="0 0 10 10"><path d="M7 0v10L2 5z"/></svg></button><button class="nav" aria-label="下一个"><svg viewBox="0 0 10 10"><path d="M3 0v10l5-5z"/></svg></button><button class="nav" aria-label="最后一个"><svg viewBox="0 0 10 10"><path d="M8 0h1v10H8zM2 0v10l5-5z"/></svg></button>
      <button class="tab on">模型</button>
      <button class="tab">a3</button><svg class="slash" viewBox="0 0 8 14"><path d="M7 0 1 14M2 6l4 8"/></svg>
      <button class="tab">a4</button><svg class="slash" viewBox="0 0 8 14"><path d="M7 0 1 14M2 6l4 8"/></svg>
      <button class="tab">a4 <span class="han">竖</span></button><svg class="slash" viewBox="0 0 8 14"><path d="M7 0 1 14"/></svg>
    </div>
  </section>
</main>

<section class="command">
  <i class="grip"></i>
  <div class="prompt"><label for="cmd">命令：</label><input id="cmd" type="text"></div>
</section>

<footer class="status">
  <output class="coords">74691.6421, 73237.8824, 0.0000</output>
  <button>捕捉</button><button>栅格</button><button>正交</button><button>极轴</button><button class="on">对象捕捉</button><button>对象追踪</button><button class="mono">DUCS</button><button class="mono">DYN</button><button>线宽</button><button class="on">模型</button>
  <div class="scale"><span>注释比例:</span><button class="flat mono">1:8<svg class="tri"><use href="#down"/></svg></button></div>
  <svg class="i16" viewBox="0 0 16 16"><path fill="#fff" stroke="#2c6397" stroke-width="1.500" d="m1 14 5-11 5 11-5-3z"/><circle cx="12" cy="4" r="3.500" fill="#f6dd42"/></svg>
  <svg class="i16 gap" viewBox="0 0 16 16"><path fill="#ddd" stroke="#999" stroke-width="1.500" d="m1 14 5-10 4 10-4-3zM9 9l6-8-2 7z"/></svg>
  <div class="well">
    <svg class="i16" viewBox="0 0 16 16"><path fill="none" stroke="#4f480c" stroke-width="2" d="M9 8V4c0-4 5-4 5 0v3"/><path fill="#d6bd19" stroke="#3e3800" d="M1.500 6.500h9v8h-9z"/><path class="k" d="M2 9.500h8M2 12.500h8"/></svg>
    <svg class="i16" viewBox="0 0 16 16"><path fill="#356b91" d="M0 0h11v13H0z"/><path fill="none" stroke="#fff" d="M3.500 2v9M7.500 3v8M1 4h9"/><circle cx="11" cy="11" r="4.500" fill="#36a83c"/><path fill="none" stroke="#fff" stroke-width="1.500" d="m8 11 2 2 4-4"/></svg>
  </div>
  <svg class="tri low"><use href="#down"/></svg>
  <svg class="i16" viewBox="0 0 16 16"><path fill="#fff" stroke="#17518c" d="M.5.500h15v15H.5z"/><path fill="#a7cdf1" stroke="#4d86bd" d="M2.500 2.500h11v11h-11z"/></svg>
</footer>

<div class="taskbar">
  <button class="start"><svg class="i16" viewBox="0 0 16 16"><path fill="#e6502d" d="M2 2c2-1 4-1 6 0L7 7c-2-1-4-1-6 0z"/><path fill="#64ad35" d="M9 3c2 1 4 1 6 0l-1 5c-2 1-4 1-6 0z"/><path fill="#3a72d4" d="M1 8c2-1 4-1 6 0l-1 5c-2-1-4-1-6 0z"/><path fill="#f5c628" d="M8 9c2 1 4 1 6 0l-1 5c-2 1-4 1-6 0z"/></svg>开始</button>
  <i class="divide"></i>
  <div class="quick">
    <button aria-label="Internet Explorer"><svg class="i16" viewBox="0 0 16 16"><path fill="none" stroke="#2a7bd0" stroke-width="3" d="M13 11c-3 5-10 3-10-2s9-7 10 0H4"/><path fill="none" stroke="#62b4ee" stroke-width="1.500" d="M1 14C-1 9 9 0 15 2"/></svg></button>
    <button aria-label="显示桌面"><svg class="i16" viewBox="0 0 16 16"><path fill="#8bc4ef" stroke="#27679f" d="m1.500 3 10-2 3 3-1 9-9 2-3-3z"/><path fill="#fff" d="m4 4 7-1v8l-7 1z"/><path class="b s2" d="M6 9c0-3 3-4 4-2M6 10h5m0-5 4-3"/></svg></button>
    <button aria-label="SolidWorks"><svg class="i16"><use href="#sw"/></svg></button>
    <button class="more" aria-label="更多">»</button>
  </div>
  <i class="divide"></i>
  <div class="tasks">
    <button><svg class="i16" viewBox="0 0 16 16"><path fill="#e4b52f" stroke="#8c6b12" d="M.5 3.500 2 1.500h4l2 2h6v10H2z"/><path fill="#ffe98d" stroke="#a57f1b" d="M2.500 6.500h13l-2 8h-11z"/></svg><span class="han">楼面圆窗广告灯箱</span></button>
    <button><svg class="i16"><use href="#sw"/></svg><span>SolidWorks Office Profes...</span></button>
    <button><svg class="i16" viewBox="0 0 16 16"><circle cx="8" cy="8" r="7.500" fill="#2a6cc0"/><path fill="none" stroke="#fff" stroke-width="2" d="M5 12V7c0-3 6-3 6 0v5M8 7v4"/></svg><span class="han">『机械零部件、机构、...</span></button>
    <button class="on"><svg class="i16"><use href="#acad"/></svg><span>AutoCAD 2008 - [E:\SOH...</span></button>
  </div>
  <div class="lang">
    <i class="divide"></i>
    <button aria-label="键盘"><svg class="i16" viewBox="0 0 16 16"><path fill="#fff" stroke="#000" d="M.5 6.500h15v8H.5z"/><path class="k" stroke-dasharray="1 1" d="M2 8.500h12M2 10.500h12M4 12.500h8"/><path class="k" d="M5 6c0-3 4-1 4-4"/></svg></button>
    <i class="divide dark"></i>
    <button aria-label="麦克风"><svg class="i16" viewBox="0 0 16 16"><path class="k" d="M1 15c4 1 2-3 5-5"/><path stroke="#222" stroke-width="3" d="m5 11 6-7"/><path stroke="#ddd" d="m5 11 6-7"/><circle cx="12" cy="4" r="3" fill="#aaa" stroke="#000"/></svg></button>
    <i class="divide dark"></i>
  </div>
  <div class="tray">
    <span class="more">«</span>
    <svg class="i16" viewBox="0 0 16 16"><path fill="#2447a0" stroke="#778" d="M5.500 1.500h9v7h-9zM1.500 5.500h8v6h-8z"/><path fill="#99a" d="M3 12h6v2H3zM10 9h4v2h-4z"/></svg>
    <svg class="i16" viewBox="0 0 16 16"><ellipse cx="8" cy="8" rx="6" ry="7"/><ellipse cx="8" cy="11" rx="4" ry="4" fill="#fff"/><path fill="#fff" d="M5 3h2v3H5zM9 3h2v3H9z"/><path fill="#f1b620" d="M5 6h6l-3 2zM2 14h5v2H2z"/><path stroke="#e02a20" stroke-width="3" d="M2 9h10"/><circle cx="12" cy="12" r="4" fill="#f4a11c"/><path stroke="#fff" stroke-width="1.500" d="M10 12h4"/></svg>
    <time>20:11</time>
  </div>
</div>
</body>
</html>
```
FILE: styles.css
```css
* { box-sizing: border-box; }

body {
  margin: 0;
  min-height: 100vh;
  display: flex;
  flex-direction: column;
  background: #d4d0c8;
  color: #000;
  font: 12px/16px "Noto Sans", "Noto Sans CJK SC", sans-serif;
}

button, input, select { font: inherit; color: inherit; }
button { margin: 0; padding: 0; border: 0; background: none; white-space: nowrap; }
svg { display: block; flex: none; }
.defs { display: none; }
.i16 { width: 16px; height: 16px; }
.i14 { width: 14px; height: 14px; }

/* icon strokes */
.k { fill: none; stroke: #000; }
.b { fill: none; stroke: #2c6598; }
.g { fill: none; stroke: #55534e; }
.w { fill: #dcebf8; stroke: #2c6598; }
.n { fill: #1c67a3; }
.kk { stroke: #111; }
.s2 { stroke-width: 1.3; }
.gl7, .gl8, .gl9, .gl12, .gl15, .gl17, .q, .sw { font-family: "Liberation Sans", sans-serif; }
.gl7 { font-size: 7px; }
.gl8 { font-size: 8px; font-weight: bold; }
.gl9 { font-size: 9px; font-weight: bold; }
.gl12 { font-size: 12px; font-weight: bold; fill: #2c5787; }
.gl15 { font-size: 15px; }
.gl17 { font-size: 17px; }
.q { font-size: 14px; font-weight: bold; fill: #fff; }
.sw { font-size: 8px; font-weight: bold; fill: #fff; }

/* title and menu */
.title {
  display: flex;
  align-items: center;
  height: 18px;
  padding: 0 2px;
  gap: 1px;
  background: linear-gradient(90deg, #0a246a, #a6caf0);
}
.title h1 { flex: 1; margin: 0; font-size: 12px; line-height: 18px; font-weight: 700; color: #fff; white-space: nowrap; overflow: hidden; }
.title h1 span { font-size: 13px; line-height: 16px; }
.winbtns { display: flex; }
.winbtns button, .drop, .start, .tasks button {
  border: 1px solid;
  border-color: #fff #404040 #404040 #fff;
  box-shadow: inset -1px -1px #808080;
  background: #d4d0c8;
}
.winbtns button { width: 16px; height: 14px; padding: 1px; }
.winbtns svg { width: 12px; height: 10px; }
.winbtns .x { margin-left: 2px; }

.menu { display: flex; align-items: center; height: 20px; padding: 0 2px 0 5px; }
.menu > button { padding: 0 6px; line-height: 20px; }
.menu > .latin { padding: 0 4px; font-size: 11px; }
.menu > .i16 + button { padding-left: 5px; }
.ask {
  width: 201px;
  height: 18px;
  margin-left: auto;
  padding: 0 1px;
  border: 1px solid;
  border-color: #666 #eee #eee #666;
  border-radius: 0;
  background: #fff;
}
.ask::placeholder { color: #808080; opacity: 1; }
.askbtns { display: flex; margin-right: 8px; border: 1px solid #8b95a8; border-radius: 3px; background: linear-gradient(#fff, #ccd6ea); }
.askbtns button { display: flex; align-items: center; justify-content: center; width: 18px; height: 15px; border-left: 1px solid #8b95a8; }
.askbtns .wide { width: 28px; gap: 4px; border-left: 0; }
.tiny { width: 5px; height: 3px; }

/* horizontal toolbars */
.row { display: flex; height: 28px; border-top: 1px solid #fff; }
.bar {
  display: flex;
  align-items: center;
  height: 27px;
  padding-right: 4px;
  border: 1px solid;
  border-color: #fff #808080 #808080 #fff;
}
.grip {
  flex: none;
  width: 7px;
  height: 23px;
  margin: 0 3px 0 2px;
  border: solid #fff;
  border-width: 0 2px;
  box-shadow: 1px 0 #808080, inset 1px 0 #808080;
}
.t { display: flex; align-items: center; justify-content: center; flex: none; width: 23px; height: 22px; }
.t svg { width: 16px; height: 16px; overflow: visible; }
.t.arrow { width: 13px; }
.t.arrow svg { width: 5px; height: 3px; }
.off { fill: #fff; }
.sep { flex: none; width: 2px; height: 20px; margin: 0 2px; border-left: 1px solid #808080; border-right: 1px solid #fff; }
.far { margin: 0 3px; }

.combo {
  display: flex;
  align-items: center;
  height: 21px;
  margin-left: 1px;
  border: 2px solid;
  border-color: #606060 #e8e5df #e8e5df #606060;
  background: #fff;
  font-family: "Liberation Mono", "Noto Sans CJK SC", monospace;
  font-size: 10px;
}
.combo select {
  flex: 1;
  min-width: 0;
  height: 17px;
  padding: 0 0 0 3px;
  border: 0;
  background: none;
  appearance: none;
  opacity: 1;
}
.in select { padding-left: 15px; }
.drop { display: flex; align-items: center; justify-content: center; width: 15px; height: 17px; pointer-events: none; }
.drop svg { width: 7px; height: 4px; }
.style { width: 117px; }
.layer { width: 297px; }
.color { width: 148px; }
.ltype { width: 157px; }
.lweight { width: 122px; }
.plot { width: 119px; }
.cjk { font-size: 12px; }
.plot select { padding-left: 7px; }
.disabled { background: #d4d0c8; color: #808080; fill: #808080; }
.lay { width: 76px; height: 16px; margin-left: 2px; }
.sw10 { width: 10px; height: 10px; margin: 0 2px 0 4px; }
.rule { width: 60px; height: 1px; margin-left: 2px; background: #000; }
.rule.short { width: 36px; }

/* docked tool columns */
main { flex: 1; display: flex; border-top: 1px solid #404040; }
.dock { display: flex; flex: none; width: 79px; border-right: 1px solid #808080; }
.col { width: 26px; }
.vbar {
  display: flex;
  flex-direction: column;
  align-items: center;
  width: 24px;
  margin-bottom: 1px;
  padding-bottom: 5px;
  border: 1px solid;
  border-color: #fff #808080 #808080 #fff;
}
.vgrip { width: 20px; height: 6px; margin: 2px 0 1px; border: solid #fff; border-width: 2px 0; box-shadow: 0 1px #808080, inset 0 1px #808080; }
.vsep { width: 19px; height: 2px; margin: 2px 0; border-top: 1px solid #808080; border-bottom: 1px solid #fff; }

/* drawing */
.view { flex: 1; display: flex; flex-direction: column; min-width: 0; padding-right: 2px; border-left: 1px solid #000; }
.canvas { flex: 1; width: 100%; min-height: 0; background: #000; shape-rendering: crispEdges; }
.axis { font: 100 22px Roboto, sans-serif; fill: #fff; }
.measure { font: 100 77px Roboto, sans-serif; fill: #c8141c; }

.tabs { display: flex; align-items: center; height: 18px; padding-bottom: 2px; font-family: "Liberation Mono", monospace; font-size: 10px; }
.nav { display: flex; align-items: center; justify-content: center; width: 14px; height: 15px; border: 1px solid; border-color: #fff #808080 #808080 #fff; fill: #808080; }
.nav svg { width: 10px; height: 10px; }
.tab { display: flex; align-items: center; gap: 5px; height: 15px; padding: 0 4px; line-height: 15px; }
.tab.on {
  justify-content: center;
  width: 46px;
  margin-left: 2px;
  background: #000;
  color: #fff;
  font-family: "Noto Sans CJK SC", sans-serif;
  font-size: 12px;
  clip-path: polygon(0 0, 100% 0, 88% 100%, 12% 100%);
}
.slash { width: 8px; height: 14px; fill: none; stroke: #333; }
.han { font-family: "Noto Sans CJK SC", sans-serif; font-size: 12px; }

/* command line */
.command { display: flex; align-items: center; height: 46px; padding: 8px 24px 0 4px; border-top: 1px solid #fff; box-shadow: inset 0 4px #d4d0c8, inset 0 6px #202020; }
.command .grip { height: 25px; }
.prompt { flex: 1; display: flex; align-items: flex-end; height: 30px; padding: 0 2px 1px; border: 2px solid; border-color: #000 #eee #eee #000; background: #fff; font-size: 14px; line-height: 18px; }
.prompt input { flex: 1; height: 18px; padding: 0; border: 0; outline: 0; background: none; }

/* status bar */
.status { display: flex; align-items: center; gap: 4px; height: 24px; padding: 0 4px 0 5px; border-top: 1px solid #808080; box-shadow: inset 0 1px #fff; }
.coords, .mono { font-family: "Liberation Mono", monospace; font-size: 10px; }
.coords { width: 222px; height: 18px; margin-right: 1px; line-height: 16px; border: 1px solid #808080; }
.status > button { height: 19px; padding: 0 1px; line-height: 17px; border: 1px solid; border-color: #fff #808080 #808080 #fff; }
.status > .on { border-color: #000 #fff #fff #000; }
.scale { display: flex; align-items: center; gap: 8px; margin-left: auto; margin-right: 6px; }
.flat { display: flex; align-items: center; gap: 5px; }
.tri { width: 7px; height: 4px; }
.low { margin: 4px 4px 0; }
.gap { margin: 0 1px 0 4px; }
.well { display: flex; align-items: center; gap: 4px; height: 19px; padding: 0 3px; border: 1px solid; border-color: #808080 #fff #fff #808080; }

/* taskbar */
.taskbar { display: flex; align-items: center; height: 28px; padding: 0 2px; border-top: 1px solid #fff; font-size: 11px; }
.start { display: flex; align-items: center; width: 47px; height: 22px; padding: 0 2px; gap: 1px; font-size: 12px; }
.divide { width: 2px; height: 20px; margin-left: 7px; border-left: 1px solid #fff; border-right: 1px solid #808080; }
.quick { display: flex; align-items: center; gap: 7px; padding-left: 8px; }
.quick .more { margin-left: 4px; }
.more { font-size: 15px; line-height: 16px; }
.tasks { display: flex; flex: 1; gap: 3px; min-width: 0; margin-left: 4px; }
.tasks button { display: flex; align-items: center; gap: 4px; width: 160px; height: 23px; padding: 0 3px; overflow: hidden; }
.tasks .on { border-color: #404040 #fff #fff #404040; box-shadow: inset 1px 1px #808080; background: #ebe9e4; }
.lang { display: flex; align-items: center; gap: 5px; margin-right: 5px; }
.lang .divide { margin-left: 0; }
.tray { display: flex; align-items: center; gap: 4px; height: 23px; padding: 0 5px; border: 1px solid; border-color: #808080 #fff #fff #808080; }
.tray time { margin-left: 2px; }
```
